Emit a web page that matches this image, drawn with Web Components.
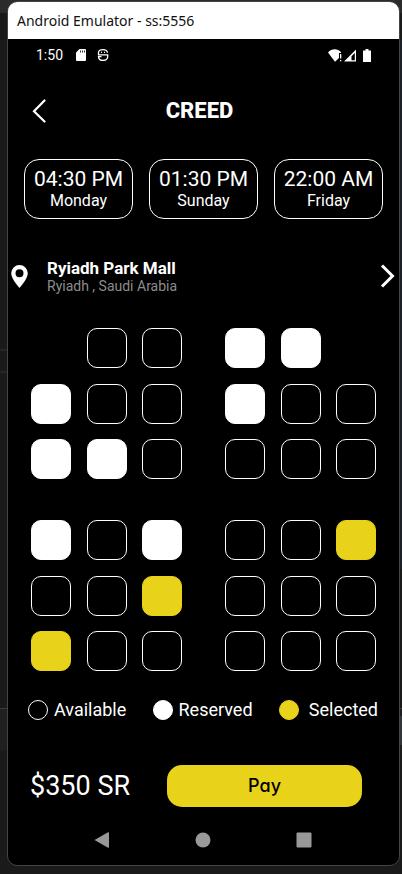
<!DOCTYPE html>
<html lang="en">
<head>
<meta charset="utf-8">
<meta name="viewport" content="width=device-width, initial-scale=1">
<title>Android Emulator</title>
<style>
  html, body { margin: 0; min-height: 100%; }
  body {
    box-sizing: border-box;
    min-height: 100vh;
    padding: 1px 2px 8px 7px;
    font-family: Roboto, "Liberation Sans", sans-serif;
    color: #fff;
    background:
      linear-gradient(#2b2b2b, #2b2b2b) 0 0 / 100% 13px no-repeat,
      linear-gradient(#262626, #262626) 0 349px / 7px 2px no-repeat,
      linear-gradient(#262626, #262626) 0 371px / 7px 2px no-repeat,
      linear-gradient(#333639, #333639) 100% 716px / 3px 29px no-repeat,
      linear-gradient(#1b2127, #1b2127) 100% 40px / 3px 529px no-repeat,
      linear-gradient(#3a3a3a, #3a3a3a) 0 708px / 100% 1px no-repeat,
      linear-gradient(#202020, #202020) 0 709px / 100% 41px no-repeat,
      #1a1a1a;
    display: flex;
  }
</style>
</head>
<body>
<emulator-window caption="Android Emulator - ss:5556">
  <status-bar></status-bar>
  <page-header>CREED</page-header>
  <time-list>
    <time-card time="04:30 PM" day="Monday"></time-card>
    <time-card time="01:30 PM" day="Sunday"></time-card>
    <time-card time="22:00 AM" day="Friday"></time-card>
  </time-list>
  <venue-row>
    <span slot="name">Ryiadh Park Mall</span>
    <span slot="place">Ryiadh , Saudi Arabia</span>
  </venue-row>
  <seat-map>
    <seat-block seats="-aa raa rra"></seat-block>
    <seat-block seats="rr- raa aaa"></seat-block>
    <seat-block seats="rar aas saa"></seat-block>
    <seat-block seats="aas aaa aaa"></seat-block>
  </seat-map>
  <seat-legend></seat-legend>
  <pay-bar><span slot="price">$350 SR</span>Pay</pay-bar>
  <nav-bar></nav-bar>
</emulator-window>

<script>
const define = (name, html, fill) => customElements.define(name, class extends HTMLElement {
  connectedCallback() {
    if (this.shadowRoot) return;
    const root = this.attachShadow({ mode: "open" });
    root.innerHTML = "<style>*{box-sizing:border-box}:host{display:block;box-sizing:border-box}button{margin:0;padding:0;border:0;background:none;color:inherit;font:inherit}svg{display:block}</style>" + html;
    if (fill) fill(root, this);
  }
});

define("emulator-window", `
<style>
  :host { flex: 1; display: flex; flex-direction: column; border: 1px solid #444; border-radius: 10px; background: #000; overflow: hidden; }
  header { height: 37px; padding: 0 9px; display: flex; align-items: center; background: #fff; color: #111; font: 14px/20px "Noto Sans", sans-serif; }
  main { flex: 1; display: flex; flex-direction: column; }
</style>
<header></header><main><slot></slot></main>`,
(r, h) => { r.querySelector("header").textContent = h.getAttribute("caption"); });

define("status-bar", `
<style>
  :host { display: flex; align-items: center; height: 32px; padding: 0 28px; font-size: 14px; line-height: 16px; }
  .sd { margin-left: 13px; }
  .bot { margin-left: 11px; }
  .signals { margin-left: auto; }
</style>
<span>1:50</span>
<svg class="sd" width="10" height="12" viewBox="0 0 10 12"><path fill="#fff" d="M3.5 0H9a1 1 0 0 1 1 1v10a1 1 0 0 1-1 1H1a1 1 0 0 1-1-1V3.5z"/><path stroke="#000" d="M4.500 1.500v2M6.500 1.500v2M8.500 1.500v2" stroke-width=".8"/></svg>
<svg class="bot" width="12" height="12" viewBox="0 0 12 12" fill="none" stroke="#fff" stroke-width="1.3"><path d="M10.400 3.700C10.200 1.500 8.600.700 6 .700S1.500 1.700 1.500 3.500v2.300h9.200v2C10.700 10 8.500 11.400 6 11.400S1.600 10 1.500 7.600h3"/><path d="M4 3.300h1M7 3.300h1"/></svg>
<svg class="signals" width="43" height="13" viewBox="0 0 43 13" fill="#fff"><path d="M0 3.500C3.500-.800 10-.800 13 3.300V4H11v5L7 12.800z"/><path d="M12 5h1.300v4.500H12zM12 11h1.300v1.300H12z"/><path fill-rule="evenodd" d="M28 .500V12.500H16zM26.800 4v7.300h-3.300V7.300z"/><path d="M37.500 0h3v1.500H43V13h-8V1.500h2.500z"/></svg>`);

define("page-header", `
<style>
  :host { display: grid; grid-template-columns: 1fr auto 1fr; align-items: center; height: 80px; padding: 0 32px 0 24px; }
  button { width: 14px; height: 24px; }
  h1 { margin: 0; font-size: 22px; line-height: 28px; font-weight: 800; }
</style>
<button aria-label="Back"><svg width="14" height="24" viewBox="0 0 14 24" fill="none" stroke="#fff" stroke-width="2.200" stroke-linecap="round"><path d="M12.500 1.500 2 12.200 12.500 22.500"/></svg></button>
<h1><slot></slot></h1>`);

define("time-list", `
<style>
  :host { display: flex; gap: 16px; padding: 8px 16px 0; }
</style><slot></slot>`);

define("time-card", `
<style>
  :host { flex: 1; }
  button { width: 100%; height: 60px; border: 1px solid #fff; border-radius: 15px; display: flex; flex-direction: column; align-items: center; justify-content: center; white-space: nowrap; }
  .time { font-size: 21px; line-height: 24px; }
  .day { font-size: 16px; line-height: 20px; }
</style>
<button><span class="time"></span><span class="day"></span></button>`,
(r, h) => { for (const k of ["time", "day"]) r.querySelector("." + k).textContent = h.getAttribute(k); });

define("venue-row", `
<style>
  :host { display: flex; align-items: center; padding: 39px 4px 0 3px; }
  .text { flex: 1; padding-left: 19px; }
  .name { font-size: 17px; line-height: 20px; font-weight: 700; }
  .place { font-size: 14px; line-height: 16px; color: #8c8c8c; }
</style>
<svg width="17" height="23" viewBox="0 0 17 23"><path fill="#fff" fill-rule="evenodd" d="M8.500 0a8.300 8.300 0 0 1 8.300 8.300C16.800 14 8.500 23 8.500 23S.200 14 .200 8.300A8.300 8.300 0 0 1 8.500 0zm0 4.300a4 4 0 1 0 0 8 4 4 0 0 0 0-8z"/></svg>
<div class="text"><div class="name"><slot name="name"></slot></div><div class="place"><slot name="place"></slot></div></div>
<button aria-label="Change location"><svg width="15" height="24" viewBox="0 0 15 24" fill="none" stroke="#fff" stroke-width="3"><path d="M2 1.500 12.500 12 2 22.500"/></svg></button>`);

define("seat-map", `
<style>
  :host { display: grid; grid-template-columns: 1fr 1fr; gap: 41px 43px; padding: 34px 23px 0; }
</style><slot></slot>`);

define("seat-block", `
<style>
  :host { display: grid; grid-template-columns: repeat(3, 40px); grid-auto-rows: 40px; justify-content: space-between; align-content: space-between; aspect-ratio: 1; }
  button { border: 1px solid #fff; border-radius: 10px; }
  .r { background: #fff; }
  .s { background: #e8d31a; border-color: #e8d31a; }
</style>`,
(r, h) => {
  const names = { a: "Available", r: "Reserved", s: "Selected" };
  for (const c of h.getAttribute("seats").replace(/ /g, "")) {
    const el = document.createElement(c === "-" ? "span" : "button");
    if (c !== "-") { el.className = c; el.setAttribute("aria-label", names[c] + " seat"); }
    r.append(el);
  }
});

define("seat-legend", `
<style>
  :host { display: flex; justify-content: space-between; padding: 28px 21px 0 20px; font-size: 18px; line-height: 22px; }
  div { display: flex; align-items: center; gap: 6px; }
  .wide { gap: 10px; }
  i { width: 20px; height: 20px; border: 1px solid #fff; border-radius: 50%; }
  .r { background: #fff; }
  .s { background: #e8d31a; border-color: #e8d31a; }
</style>
<div><i></i>Available</div><div><i class="r"></i>Reserved</div><div class="wide"><i class="s"></i>Selected</div>`);

define("pay-bar", `
<style>
  :host { display: flex; align-items: center; gap: 37px; padding: 44px 37px 0 22px; }
  .price { font-size: 27px; line-height: 32px; white-space: nowrap; }
  button { flex: 1; height: 42px; border-radius: 15px; background: #e8d31a; color: #000; font: 500 18px/22px Inter, sans-serif; font-feature-settings: "cv11"; }
</style>
<span class="price"><slot name="price"></slot></span><button><slot></slot></button>`);

define("nav-bar", `
<style>
  :host { display: flex; justify-content: space-between; align-items: center; padding: 25px 87px 0 86px; }
  button { width: 16px; height: 16px; }
</style>
<button aria-label="Back"><svg width="16" height="16" fill="#999"><path d="M.500 8 14 .300q1-.300 1 .700v14q0 1-1 .700z"/></svg></button>
<button aria-label="Home"><svg width="16" height="16" fill="#999"><circle cx="8" cy="8" r="7.500"/></svg></button>
<button aria-label="Overview"><svg width="16" height="16" fill="#999"><rect x=".500" y=".500" width="15" height="15" rx="1"/></svg></button>`);
</script>
</body>
</html>
